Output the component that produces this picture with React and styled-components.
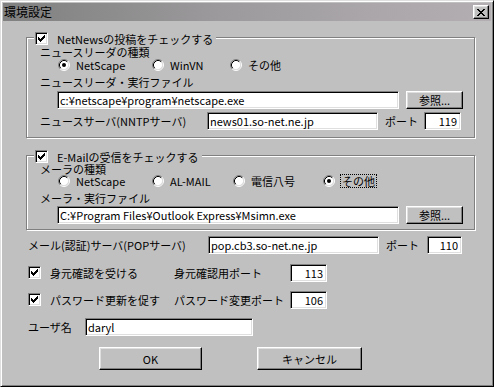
import React from 'react';
import styled, { createGlobalStyle } from 'styled-components';

const GlobalStyle = createGlobalStyle`
  html, body {
    margin: 0;
    padding: 0;
    background: #c0c0c0;
  }
  body {
    font-family: "Noto Sans CJK JP", "Liberation Sans", sans-serif;
    font-size: 11px;
    color: #000;
  }
`;

const Window = styled.div`
  box-sizing: border-box;
  width: 494px;
  height: 387px;
  padding: 2px;
  background: #c0c0c0;
  border: 1px solid;
  border-color: #dfdfdf #000 #000 #dfdfdf;
  box-shadow: inset 1px 1px 0 #fff, inset -1px -1px 0 #808080;
`;

const TitleBar = styled.div`
  height: 18px;
  display: flex;
  align-items: center;
  justify-content: space-between;
  padding: 0 2px 0 1px;
  background: linear-gradient(90deg, #808080 0%, #9c9a9c 45%, #aaa6aa 75%, #b2aeb2 100%);
`;

const Title = styled.span`
  font-size: 12px;
  line-height: 14px;
  color: #000;
`;

const RaisedButton = styled.button`
  box-sizing: border-box;
  width: ${p => p.$w}px;
  height: ${p => p.$h}px;
  margin: 0;
  margin-left: ${p => p.$ml || 0}px;
  padding: 0;
  flex: none;
  display: flex;
  align-items: center;
  justify-content: center;
  font: inherit;
  color: #000;
  background: #c0c0c0;
  border: 1px solid;
  border-color: #fff #000 #000 #fff;
  box-shadow: inset -1px -1px 0 #808080, inset 1px 1px 0 #dfdfdf;
  outline: none;
`;

const Body = styled.div`
  padding: 16px 16px 0 23px;
`;

const Group = styled.div`
  position: relative;
  box-sizing: border-box;
  width: 449px;
  margin-top: ${p => p.$mt || 0}px;
  padding: ${p => p.$pad};
  border: 1px solid #808080;
  box-shadow: 1px 1px 0 #fff, inset 1px 1px 0 #fff;
`;

const Legend = styled.div`
  position: absolute;
  top: -6px;
  left: 7px;
  display: flex;
  align-items: center;
  gap: 9px;
  height: 13px;
  padding: 0 3px 0 1px;
  background: #c0c0c0;
  line-height: 12px;
  white-space: nowrap;
`;

const Label = styled.div`
  line-height: 12px;
  height: 12px;
  margin-top: ${p => p.$mt || 0}px;
  white-space: nowrap;
`;

const RadioRow = styled.div`
  display: grid;
  grid-template-columns: ${p => p.$cols};
  align-items: center;
  height: 14px;
  margin-top: ${p => p.$mt || 0}px;
  padding-left: 18px;
`;

const RadioItem = styled.span`
  display: inline-flex;
  align-items: center;
  gap: 6px;
  white-space: nowrap;
  line-height: 12px;
`;

const FocusText = styled.span`
  outline: 1px dotted #000;
  outline-offset: 0;
  padding: 0 1px;
`;

const Row = styled.div`
  display: flex;
  align-items: center;
  height: 19px;
  margin-top: ${p => p.$mt || 0}px;
  padding-left: ${p => p.$pl || 0}px;
`;

const Cell = styled.span`
  flex: none;
  width: ${p => p.$w}px;
  margin-left: ${p => p.$ml || 0}px;
  white-space: nowrap;
  line-height: 14px;
`;

const Field = styled.input`
  box-sizing: border-box;
  flex: none;
  width: ${p => p.$w}px;
  height: 18px;
  margin: 0;
  padding: 0 ${p => (p.$num ? '3px' : '2px')};
  border: 1px solid;
  border-color: #808080 #fff #fff #808080;
  box-shadow: inset 1px 1px 0 #000, inset -1px -1px 0 #dfdfdf;
  background: #fff;
  font: inherit;
  color: #000;
  text-align: ${p => (p.$num ? 'right' : 'left')};
  outline: none;
`;

const CheckBox = styled.span`
  box-sizing: border-box;
  flex: none;
  width: 13px;
  height: 13px;
  display: flex;
  align-items: center;
  justify-content: center;
  background: #fff;
  border: 1px solid;
  border-color: #808080 #fff #fff #808080;
  box-shadow: inset 1px 1px 0 #000, inset -1px -1px 0 #dfdfdf;
`;

const ButtonRow = styled.div`
  display: flex;
  gap: 55px;
  margin-top: 11px;
  padding-left: 73px;
`;

const checkPixels = [
  [6, 0, 1], [5, 1, 2], [0, 2, 1], [4, 2, 3], [0, 3, 2],
  [3, 3, 3], [0, 4, 5], [1, 5, 3], [2, 6, 1],
];

const Check = ({ checked }) => (
  <CheckBox>
    {checked && (
      <svg width="7" height="7" viewBox="0 0 7 7" shapeRendering="crispEdges">
        {checkPixels.map(([x, y, w]) => (
          <rect key={`${x}-${y}`} x={x} y={y} width={w} height="1" fill="#000" />
        ))}
      </svg>
    )}
  </CheckBox>
);

const closePixels = [
  [0, 0, 2], [6, 0, 2], [1, 1, 2], [5, 1, 2], [2, 2, 4], [3, 3, 2],
  [2, 4, 4], [1, 5, 2], [5, 5, 2], [0, 6, 2], [6, 6, 2],
];

const CloseIcon = () => (
  <svg width="8" height="7" viewBox="0 0 8 7" shapeRendering="crispEdges">
    {closePixels.map(([x, y, w]) => (
      <rect key={`${x}-${y}`} x={x} y={y} width={w} height="1" fill="#000" />
    ))}
  </svg>
);

const Radio = ({ checked, children }) => (
  <RadioItem>
    <svg width="12" height="12" viewBox="0 0 12 12" style={{ flex: 'none' }}>
      <circle cx="6" cy="6" r="4.5" fill="#fff" />
      <path d="M2.11 9.89A5.5 5.5 0 0 1 9.89 2.11" fill="none" stroke="#808080" />
      <path d="M9.89 2.11A5.5 5.5 0 0 1 2.11 9.89" fill="none" stroke="#fff" />
      <path d="M2.82 9.18A4.5 4.5 0 0 1 9.18 2.82" fill="none" stroke="#000" />
      <path d="M9.18 2.82A4.5 4.5 0 0 1 2.82 9.18" fill="none" stroke="#dfdfdf" />
      {checked && <circle cx="6" cy="6" r="2" fill="#000" />}
    </svg>
    {children}
  </RadioItem>
);

export default function App() {
  return (
    <>
      <GlobalStyle />
      <Window>
        <TitleBar>
          <Title>環境設定</Title>
          <RaisedButton $w={16} $h={14}>
            <CloseIcon />
          </RaisedButton>
        </TitleBar>
        <Body>
          <Group $pad="8px 0 7px 13px">
            <Legend>
              <Check checked />
              <span>NetNewsの投稿をチェックする</span>
            </Legend>
            <Label>ニュースリーダの種類</Label>
            <RadioRow $mt={0} $cols="94px 78px auto">
              <Radio checked>NetScape</Radio>
              <Radio>WinVN</Radio>
              <Radio>その他</Radio>
            </RadioRow>
            <Label $mt={4}>ニュースリーダ・実行ファイル</Label>
            <Row $mt={2} $pl={17}>
              <Field $w={342} defaultValue="c:¥netscape¥program¥netscape.exe" />
              <RaisedButton $w={57} $h={18} $ml={7}>参照...</RaisedButton>
            </Row>
            <Row $mt={2}>
              <Cell $w={167}>ニュースサーバ(NNTPサーバ)</Cell>
              <Field $w={171} defaultValue="news01.so-net.ne.jp" />
              <Cell $w={39} $ml={7}>ポート</Cell>
              <Field $w={37} $num defaultValue="119" />
            </Row>
          </Group>

          <Group $mt={17} $pad="7px 0 5px 13px">
            <Legend>
              <Check checked />
              <span>E-Mailの受信をチェックする</span>
            </Legend>
            <Label>メーラの種類</Label>
            <RadioRow $mt={-1} $cols="94px 81px 90px auto">
              <Radio>NetScape</Radio>
              <Radio>AL-MAIL</Radio>
              <Radio>電信八号</Radio>
              <Radio checked>
                <FocusText>その他</FocusText>
              </Radio>
            </RadioRow>
            <Label $mt={4}>メーラ・実行ファイル</Label>
            <Row $mt={1} $pl={17}>
              <Field $w={342} defaultValue="C:¥Program Files¥Outlook Express¥Msimn.exe" />
              <RaisedButton $w={57} $h={18} $ml={7}>参照...</RaisedButton>
            </Row>
          </Group>

          <Row $mt={5} $pl={2}>
            <Cell $w={180}>メール(認証)サーバ(POPサーバ)</Cell>
            <Field $w={171} defaultValue="pop.cb3.so-net.ne.jp" />
            <Cell $w={41} $ml={7}>ポート</Cell>
            <Field $w={35} $num defaultValue="110" />
          </Row>

          <Row $mt={9} $pl={2}>
            <Check checked />
            <Cell $w={124} $ml={9}>身元確認を受ける</Cell>
            <Cell $w={116}>身元確認用ポート</Cell>
            <Field $w={37} $num defaultValue="113" />
          </Row>

          <Row $mt={8} $pl={2}>
            <Check checked />
            <Cell $w={124} $ml={9}>パスワード更新を促す</Cell>
            <Cell $w={116}>パスワード変更ポート</Cell>
            <Field $w={37} $num defaultValue="106" />
          </Row>

          <Row $mt={8} $pl={2}>
            <Cell $w={57}>ユーザ名</Cell>
            <Field $w={168} defaultValue="daryl" />
          </Row>

          <ButtonRow>
            <RaisedButton $w={103} $h={23}>OK</RaisedButton>
            <RaisedButton $w={105} $h={23}>キャンセル</RaisedButton>
          </ButtonRow>
        </Body>
      </Window>
    </>
  );
}
